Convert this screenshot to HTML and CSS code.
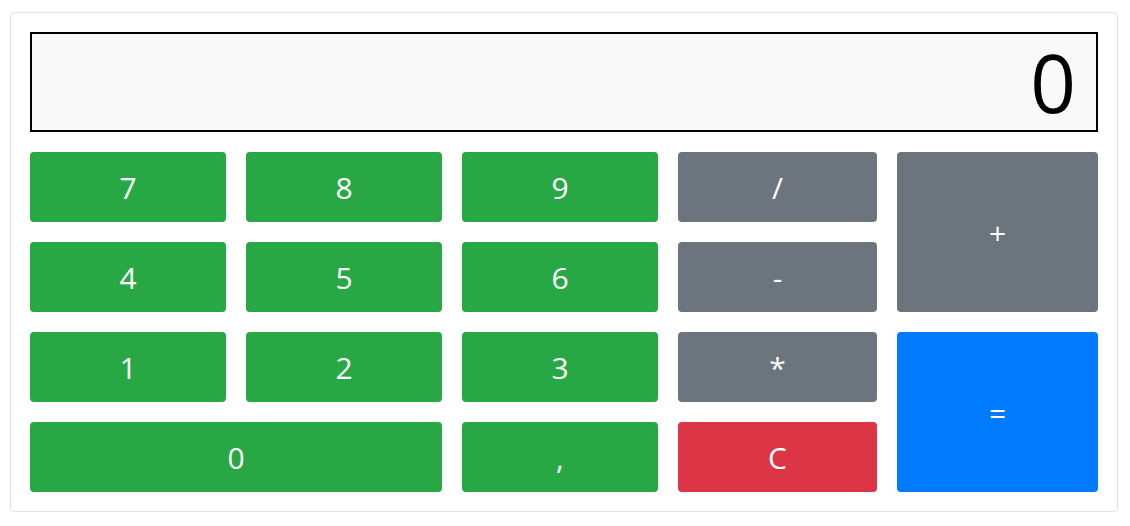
FILE: index.html
```html
<!DOCTYPE html>
<html lang="en">
<head>
  <meta charset="UTF-8" />
  <title>Calculator</title>
  <link rel="stylesheet" href="styles.css">
</head>
<body>

  <!-- Calculator card -->
  <div class="calculator">
    <div class="display" id="display">0</div>

    <div class="keys">
      <button class="key num">7</button>
      <button class="key num">8</button>
      <button class="key num">9</button>
      <button class="key op">/</button>
      <button class="key op tall">+</button>

      <button class="key num">4</button>
      <button class="key num">5</button>
      <button class="key num">6</button>
      <button class="key op">-</button>

      <button class="key num">1</button>
      <button class="key num">2</button>
      <button class="key num">3</button>
      <button class="key op">*</button>
      <button class="key equals tall">=</button>

      <button class="key num wide">0</button>
      <button class="key num">,</button>
      <button class="key clear">C</button>
    </div>
  </div>

</body>
</html>
```

FILE: styles.css
```css
body {
  margin: 12px 12px 0 10px;
  font-family: 'Open Sans', 'Noto Sans', sans-serif;
  background: #fff;
}

.calculator {
  border: 1px solid #dee2e6;
  border-radius: 4px;
  padding: 19px;
}

.display {
  height: 96px;
  border: 2px solid #000;
  background: #f9f9f9;
  text-align: right;
  padding: 0 20px;
  font-size: 80px;
  line-height: 96px;
  color: #000;
}

.keys {
  display: grid;
  grid-template-columns: 196px 196px 196px 199px 1fr;
  grid-auto-rows: 70px;
  gap: 20px;
  margin-top: 20px;
}

.key {
  border: none;
  border-radius: 4px;
  color: #fff;
  font-family: inherit;
  font-size: 30px;
  padding: 0;
  cursor: pointer;
}

.num {
  background-color: #28a745;
}

.op {
  background-color: #6c757d;
}

.equals {
  background-color: #007bff;
}

.clear {
  background-color: #dc3545;
}

.tall {
  grid-row: span 2;
}

.wide {
  grid-column: span 2;
}
```
